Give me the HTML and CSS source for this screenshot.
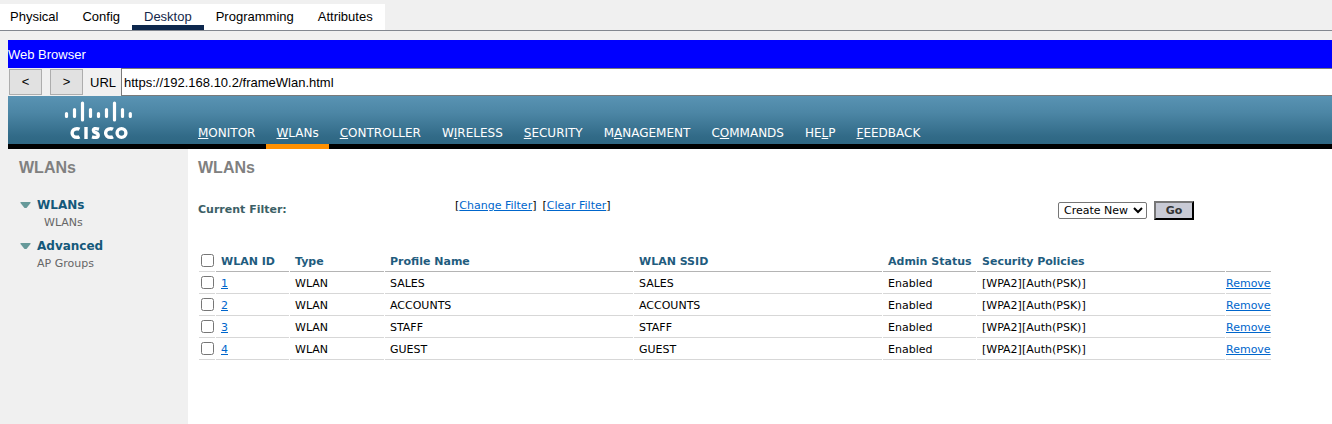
FILE: index.html
```html
<!DOCTYPE html>
<html lang="en">
<head>
<meta charset="utf-8">
<title>Web Browser</title>
<link rel="stylesheet" href="styles.css">
</head>
<body>
<nav class="tabs">
  <div class="tab-list">
    <button class="tab first">Physical</button>
    <button class="tab">Config</button>
    <button class="tab active">Desktop</button>
    <button class="tab">Programming</button>
    <button class="tab">Attributes</button>
  </div>
</nav>
<div class="browser">
  <div class="titlebar">Web Browser</div>
  <div class="address">
    <button class="step">&lt;</button>
    <button class="step">&gt;</button>
    <label class="url-label" for="url">URL</label>
    <input class="url" id="url" type="text" value="https://192.168.10.2/frameWlan.html">
  </div>
  <header class="banner">
    <svg class="logo" viewBox="0 0 68 40" role="img" aria-label="Cisco">
      <g stroke="#fff" stroke-width="3.200" stroke-linecap="round">
        <path d="M2.500 13.500v3M10.500 9.500v7M18.500 3v17M26.500 9.500v7M34.500 13.500v3M42.500 9.500v7M50.500 3v17M58.500 9.500v7M66.300 13.500v3"/>
      </g>
      <g fill="none" stroke="#fff" stroke-width="3.400">
        <path d="M15.500 29.300Q14.500 28.700 13 28.700C6.500 28.700 6.500 37.300 13 37.300Q14.500 37.300 15.500 36.700M22 27v12M35 29.100Q29.400 27.600 29.400 30.400C29.400 32.800 34.200 32.500 34.200 35.200C34.200 38 30.500 37.600 28 36.800M49 29.300Q48 28.700 46.500 28.700C40 28.700 40 37.300 46.500 37.300Q48 37.300 49 36.700"/>
        <circle cx="57.500" cy="33" r="4.400"/>
      </g>
    </svg>
    <nav class="menu">
      <a href="#"><u>M</u>ONITOR</a>
      <a href="#" class="current"><u>W</u>LANs</a>
      <a href="#"><u>C</u>ONTROLLER</a>
      <a href="#">W<u>I</u>RELESS</a>
      <a href="#"><u>S</u>ECURITY</a>
      <a href="#">M<u>A</u>NAGEMENT</a>
      <a href="#">C<u>O</u>MMANDS</a>
      <a href="#">HE<u>L</u>P</a>
      <a href="#"><u>F</u>EEDBACK</a>
    </nav>
  </header>
  <div class="body">
    <aside class="sidebar">
      <h2 class="heading">WLANs</h2>
      <section class="group">
        <a class="group-title" href="#"><svg class="arrow" viewBox="0 0 11 6"><path fill="#669999" d="M0.500 0h10v1L6.500 6h-2L0.500 1z"/></svg>WLANs</a>
        <a class="group-link nested" href="#">WLANs</a>
      </section>
      <section class="group">
        <a class="group-title" href="#"><svg class="arrow" viewBox="0 0 11 6"><path fill="#669999" d="M0.500 0h10v1L6.500 6h-2L0.500 1z"/></svg>Advanced</a>
        <a class="group-link" href="#">AP Groups</a>
      </section>
    </aside>
    <main class="content">
      <h1 class="heading">WLANs</h1>
      <div class="filter">
        <strong class="filter-label">Current Filter:</strong>
        <span class="filter-links"><span>[<a href="#">Change Filter</a>]</span> <span>[<a href="#">Clear Filter</a>]</span></span>
        <form class="actions">
          <select class="action" aria-label="Action"><option>Create New</option></select>
          <button class="go" type="button">Go</button>
        </form>
      </div>
      <table class="wlans">
        <colgroup><col class="c-check"><col class="c-id"><col class="c-type"><col><col><col class="c-status"><col><col class="c-remove"></colgroup>
        <thead>
          <tr><th class="check"><input type="checkbox" aria-label="Select all"></th><th>WLAN ID</th><th>Type</th><th>Profile Name</th><th>WLAN SSID</th><th>Admin Status</th><th>Security Policies</th><th></th></tr>
        </thead>
        <tbody>
          <tr><td class="check"><input type="checkbox" aria-label="Select WLAN 1"></td><td><a href="#">1</a></td><td>WLAN</td><td>SALES</td><td>SALES</td><td>Enabled</td><td>[WPA2][Auth(PSK)]</td><td class="remove"><a href="#">Remove</a></td></tr>
          <tr><td class="check"><input type="checkbox" aria-label="Select WLAN 2"></td><td><a href="#">2</a></td><td>WLAN</td><td>ACCOUNTS</td><td>ACCOUNTS</td><td>Enabled</td><td>[WPA2][Auth(PSK)]</td><td class="remove"><a href="#">Remove</a></td></tr>
          <tr><td class="check"><input type="checkbox" aria-label="Select WLAN 3"></td><td><a href="#">3</a></td><td>WLAN</td><td>STAFF</td><td>STAFF</td><td>Enabled</td><td>[WPA2][Auth(PSK)]</td><td class="remove"><a href="#">Remove</a></td></tr>
          <tr><td class="check"><input type="checkbox" aria-label="Select WLAN 4"></td><td><a href="#">4</a></td><td>WLAN</td><td>GUEST</td><td>GUEST</td><td>Enabled</td><td>[WPA2][Auth(PSK)]</td><td class="remove"><a href="#">Remove</a></td></tr>
        </tbody>
      </table>
    </main>
  </div>
</div>
</body>
</html>
```
FILE: styles.css
```css
* { box-sizing: border-box; }
body {
  margin: 0;
  min-height: 100vh;
  display: flex;
  flex-direction: column;
  background: #f0f0f0;
  font: 11px/14px Verdana, "DejaVu Sans", sans-serif;
  color: #000;
}
button, input, select { font: inherit; margin: 0; }
a { color: #0066cc; }

.tabs {
  padding-top: 4px;
  border-bottom: 1px solid #828790;
}
.tab-list { display: inline-flex; vertical-align: top; background: #fff; }
.tab {
  height: 26px;
  padding: 0 12px;
  border: 0;
  border-bottom: 5px solid transparent;
  border-top: 5px solid transparent;
  background: none;
  font: 13px/16px "Liberation Sans", Arial, sans-serif;
  color: #000;
}
.tab.first { padding-left: 10px; }
.tab.active { color: #14284b; border-bottom-color: #0d274d; }

.browser {
  flex: 1;
  display: flex;
  flex-direction: column;
  margin: 9px 0 0 8px;
}
.titlebar {
  height: 28px;
  background: #0000ff;
  color: #fff;
  font: 13px/29px "Liberation Sans", Arial, sans-serif;
}
.address {
  display: flex;
  align-items: center;
  height: 28px;
  font: 13px/16px "Liberation Sans", Arial, sans-serif;
}
.step {
  width: 33px;
  height: 26px;
  margin: 0 7px 0 1px;
  padding: 0;
  border: 1px solid #adadad;
  background: #e1e1e1;
}
.url-label { padding: 1px 5px 0 0; }
.url {
  flex: 1;
  height: 28px;
  padding: 0 2px;
  border: 1px solid #7a7a7a;
  border-right: 0;
  background: #fff;
  color: #000;
}

.banner {
  display: flex;
  align-items: flex-end;
  height: 53px;
  background: linear-gradient(#5993b3, #4c86a5 35%, #316a87 85%, #2f6783);
  border-bottom: 5px solid #000;
}
.logo { width: 68px; height: 40px; margin: 0 56px 4px 56px; }
.menu { display: flex; gap: 1px; margin-bottom: -5px; }
.menu a {
  padding: 0 10px 3px;
  border-bottom: 5px solid transparent;
  color: #fff;
  font: 12px/16px Verdana, "DejaVu Sans", sans-serif;
  text-decoration: none;
}
.menu u { text-underline-offset: 1px; text-decoration-skip-ink: none; }
.menu .current { border-bottom-color: #ff9000; }

.body { flex: 1; display: flex; }
.sidebar { width: 180px; padding: 9px 11px; }
.heading {
  margin: 0;
  font: bold 16px/20px "Liberation Sans", Arial, sans-serif;
  color: #808080;
}
.sidebar .heading { margin-bottom: 17px; }
.group { display: flex; flex-direction: column; margin-bottom: 5px; }
.group a { text-decoration: none; }
.group-title {
  display: flex;
  align-items: center;
  gap: 6px;
  font: bold 12px/20px Verdana, "DejaVu Sans", sans-serif;
  color: #14587a;
}
.arrow { width: 11px; height: 6px; margin-left: 1px; }
.group-link { padding-left: 18px; line-height: 16px; color: #666; }
.group-link.nested { padding-left: 25px; }

.content {
  flex: 1;
  min-width: 0;
  padding: 9px 60px 20px 10px;
  background: #fff;
}
.filter {
  display: flex;
  align-items: flex-start;
  height: 51px;
  margin-top: 20px;
  margin-bottom: 1px;
}
.filter-label { width: 257px; padding-top: 5px; color: #3c5f66; }
.filter-links { display: flex; gap: 6px; padding-top: 1px; }
.actions { display: flex; align-items: center; gap: 7px; margin: 3px 78px 0 auto; }
.action {
  width: 89px;
  height: 17px;
  padding: 0 0 0 1px;
  border: 1px solid #767676;
  border-radius: 2px;
  background: #fff;
  color: #000;
}
.go {
  width: 40px;
  height: 19px;
  padding: 0;
  border: 2px outset #767676;
  border-color: #767676 #222 #222 #767676;
  background: #c8cad5;
  color: #333;
  font-weight: bold;
}
.wlans {
  width: 100%;
  table-layout: fixed;
  border-collapse: separate;
  border-spacing: 1px 0;
}
.c-check { width: 16px; }
.c-id { width: 73px; }
.c-type { width: 94px; }
.c-status { width: 93px; }
.c-remove { width: 45px; }
.wlans th, .wlans td {
  height: 22px;
  padding: 2px 5px 0;
  border-bottom: 1px solid #d7d7d7;
  text-align: left;
  white-space: nowrap;
}
.wlans th { color: #1f5c7e; border-bottom-color: #b4b4b4; }
.wlans .check { padding: 0 0 0 2px; border-bottom-color: #d7d7d7; }
.wlans .check input { display: block; width: 13px; height: 13px; }
.wlans .remove { padding: 2px 0 0; }
```
